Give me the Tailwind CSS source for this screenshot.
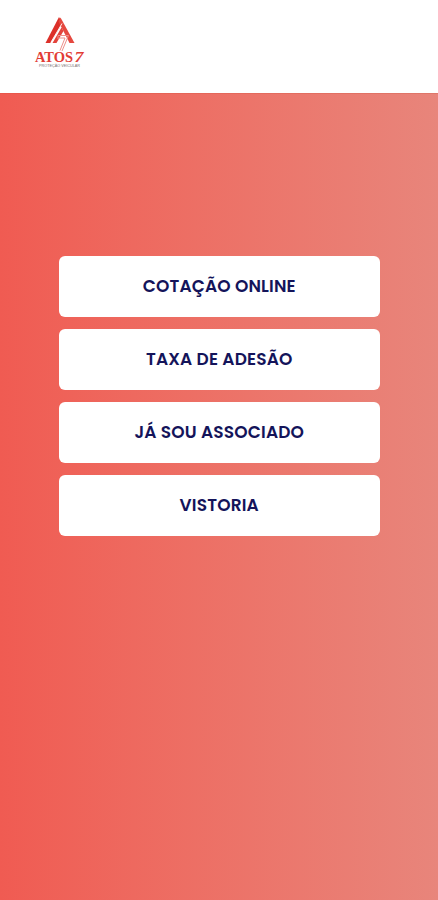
<!DOCTYPE html>
<html lang="pt-BR">
<head>
  <meta charset="UTF-8" />
  <title>ATOS7</title>
  <meta name="viewport" content="width=device-width, initial-scale=1.0" />
  <script src="https://cdn.jsdelivr.net/npm/@tailwindcss/browser@4"></script>
</head>
<body class="min-h-screen flex flex-col bg-linear-to-r from-[#f05b52] to-[#e8857b] font-['Poppins','Inter',sans-serif]">

  <!-- Header -->
  <header class="h-[93px] bg-white pl-[34px] pt-4">
    <svg class="w-[52px] h-[54px]" viewBox="0 0 52 54" fill="none" role="img" aria-label="ATOS7">
      <path d="M11.500 27 25 1 28.500 7 16.500 27Z" fill="#dc3029" />
      <path d="M26.500 1.500 40.500 27H35.500L24.500 5.500Z" fill="#e5483f" />
      <path d="M18.500 27 27.500 11.500 29.500 15 22.500 27Z" fill="#e3443c" />
      <path d="M16.800 26.500 28 7.500" stroke="#fff" stroke-width="0.900" />
      <path d="M24 19.500H34.500L28 35M24 19.500V23M24.500 22H31L26 34.500" stroke="#ee8f89" stroke-width="1" />
      <text x="1" y="46" textLength="38" lengthAdjust="spacingAndGlyphs" font-family="Liberation Serif, serif" font-size="14.500" font-weight="700" fill="#e23d35">ATOS</text>
      <text x="40.500" y="46" textLength="9" lengthAdjust="spacingAndGlyphs" font-family="Liberation Serif, serif" font-size="14.500" font-weight="700" font-style="italic" fill="#e23d35">7</text>
      <text x="5" y="50.800" textLength="41" lengthAdjust="spacingAndGlyphs" font-family="Liberation Sans, sans-serif" font-size="3.400" fill="#77706f">PROTEÇÃO VEICULAR</text>
    </svg>
  </header>

  <!-- Divider -->
  <div class="h-px bg-linear-to-r from-[#e9564a] to-[#df776a]"></div>

  <!-- Menu -->
  <main class="mt-[162px] pl-[58.5px] pr-[58px] flex flex-col gap-3 text-[17px] font-semibold text-[#14145a]">
    <a href="#" class="h-[61px] bg-white rounded-md flex items-center justify-center tracking-[0.15px]">COTAÇÃO ONLINE</a>
    <a href="#" class="h-[61px] bg-white rounded-md flex items-center justify-center tracking-[0.15px]">TAXA DE ADESÃO</a>
    <a href="#" class="h-[61px] bg-white rounded-md flex items-center justify-center tracking-[0.15px]">JÁ SOU ASSOCIADO</a>
    <a href="#" class="h-[61px] bg-white rounded-md flex items-center justify-center tracking-[0.15px]">VISTORIA</a>
  </main>
</body>
</html>
